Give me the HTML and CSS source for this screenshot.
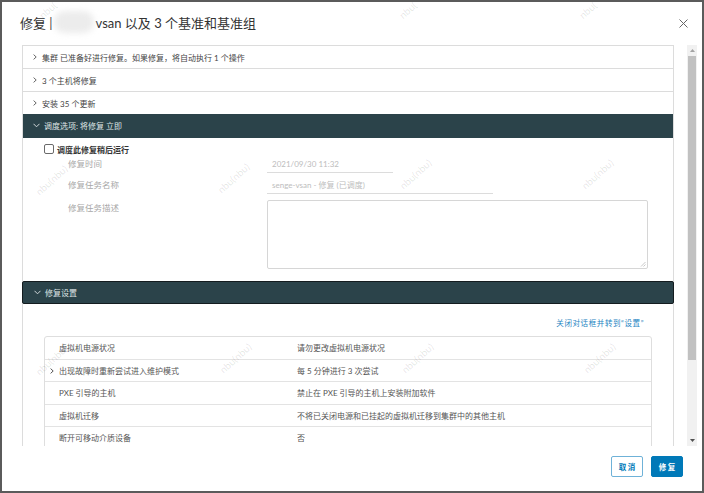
FILE: index.html
```html
<!DOCTYPE html>
<html lang="zh-CN">
<head>
<meta charset="utf-8">
<title>修复</title>
<link rel="stylesheet" href="styles.css">
</head>
<body>
<div class="dialog">
  <header class="dlg-head">
    <h1 class="title">修复 |<span class="blur"></span>vsan 以及 3 个基准和基准组</h1>
    <button class="close" aria-label="关闭">
      <svg width="9" height="9" viewBox="0 0 9 9"><path d="M0.5 0.5L8.5 8.5M8.5 0.5L0.5 8.5" stroke="#666" stroke-width="1" fill="none"/></svg>
    </button>
  </header>
  <div class="dlg-body">
    <div class="scroll">
      <div class="acc">
        <div class="acc-row"><svg class="chev" width="4" height="6" viewBox="0 0 4 6"><path d="M0.6 0.6L3.2 3L0.6 5.4" stroke="#555" stroke-width="0.9" fill="none"/></svg>集群 已准备好进行修复。如果修复，将自动执行 1 个操作</div>
        <div class="acc-row"><svg class="chev" width="4" height="6" viewBox="0 0 4 6"><path d="M0.6 0.6L3.2 3L0.6 5.4" stroke="#555" stroke-width="0.9" fill="none"/></svg>3 个主机将修复</div>
        <div class="acc-row"><svg class="chev" width="4" height="6" viewBox="0 0 4 6"><path d="M0.6 0.6L3.2 3L0.6 5.4" stroke="#555" stroke-width="0.9" fill="none"/></svg>安装 35 个更新</div>
        <div class="acc-row dark"><svg class="chev-d" width="7" height="5" viewBox="0 0 7 5"><path d="M0.5 0.8L3.5 3.8L6.5 0.8" stroke="#cfd6d8" fill="none"/></svg>调度选项: 将修复 立即</div>
        <div class="acc-panel">
          <label class="check-row"><span class="checkbox"></span>调度此修复稍后运行</label>
          <div class="form">
            <span class="flabel">修复时间</span>
            <div class="finput short">2021/09/30 11:32</div>
            <span class="flabel">修复任务名称</span>
            <div class="finput mid">senge-vsan - 修复 (已调度)</div>
            <span class="flabel tl">修复任务描述</span>
            <div class="ftextarea"><svg class="grip" width="6" height="6" viewBox="0 0 6 6"><path d="M5.5 1L1 5.5M5.5 3.5L3.5 5.5" stroke="#bbb" stroke-width="0.8"/></svg></div>
          </div>
        </div>
        <div class="acc-row dark focus"><svg class="chev-d" width="7" height="5" viewBox="0 0 7 5"><path d="M0.5 0.8L3.5 3.8L6.5 0.8" stroke="#cfd6d8" fill="none"/></svg>修复设置</div>
        <div class="acc-panel2">
          <div class="link-row"><a class="link">关闭对话框并转到“设置”</a></div>
          <div class="table">
            <div class="trow"><span class="c1">虚拟机电源状况</span><span class="c2">请勿更改虚拟机电源状况</span></div>
            <div class="trow"><span class="c1"><svg class="tchev" width="4" height="6" viewBox="0 0 4 6"><path d="M0.6 0.6L3.2 3L0.6 5.4" stroke="#444" stroke-width="0.9" fill="none"/></svg>出现故障时重新尝试进入维护模式</span><span class="c2">每 5 分钟进行 3 次尝试</span></div>
            <div class="trow"><span class="c1">PXE 引导的主机</span><span class="c2">禁止在 PXE 引导的主机上安装附加软件</span></div>
            <div class="trow"><span class="c1">虚拟机迁移</span><span class="c2">不将已关闭电源和已挂起的虚拟机迁移到集群中的其他主机</span></div>
            <div class="trow"><span class="c1">断开可移动介质设备</span><span class="c2">否</span></div>
          </div>
        </div>
      </div>
    </div>
    <div class="scrollbar">
      <svg class="arr" width="5" height="3" viewBox="0 0 5 3"><path d="M0 3L2.5 0L5 3Z" fill="#a3a3a3"/></svg>
      <div class="thumb"></div>
      <svg class="arr down" width="5" height="3" viewBox="0 0 5 3"><path d="M0 0L2.5 3L5 0Z" fill="#505050"/></svg>
    </div>
  </div>
  <footer class="dlg-foot">
    <button class="btn outline">取消</button>
    <button class="btn primary">修复</button>
  </footer>
  <div class="wm" aria-hidden="true">
    <span style="left:36px;top:2px">nbu(</span>
    <span style="left:396px;top:2px">nbu(</span>
    <span style="left:576px;top:2px">nbu(</span>
    <span style="left:30px;top:172px">nbu(nbu)</span>
    <span style="left:212px;top:170px">nbu(nbu)</span>
    <span style="left:394px;top:166px">nbu(nbu)</span>
    <span style="left:576px;top:166px">nbu(nbu)</span>
    <span style="left:30px;top:352px">nbu(nbu)</span>
    <span style="left:214px;top:350px">nbu(nbu)</span>
    <span style="left:396px;top:350px">nbu(nbu)</span>
    <span style="left:578px;top:350px">nbu(nbu)</span>
  </div>
</div>
</body>
</html>
```

FILE: styles.css
```css
* { box-sizing: border-box; }
html, body { margin: 0; padding: 0; background: #fff; }
body {
  font-family: Lato, "Noto Sans CJK SC", sans-serif;
  color: #333;
  width: 704px;
  height: 493px;
  overflow: hidden;
}
.dialog {
  position: relative;
  width: 704px;
  height: 493px;
  border: 2px solid #5b5b5b;
  display: flex;
  flex-direction: column;
  background: #fff;
  overflow: hidden;
}
.dlg-head {
  height: 42px;
  display: flex;
  align-items: center;
  justify-content: space-between;
  padding: 0 14px 2px 18px;
  flex: none;
}
.title {
  margin: 0;
  font-weight: 400;
  font-size: 13px;
  color: #333;
  display: flex;
  align-items: center;
  white-space: pre;
}
.blur {
  display: inline-block;
  width: 40px;
  height: 22px;
  margin: 0 2px 0 1px;
  background: #ececec;
  border-radius: 11px;
  filter: blur(3px);
}
.close {
  border: 0;
  background: none;
  padding: 0;
  width: 9px;
  height: 9px;
  display: flex;
  margin-top: 2px;
}
.dlg-body {
  flex: none;
  height: 402px;
  display: flex;
  padding-left: 20px;
}
.scroll {
  width: 652px;
  height: 402px;
  overflow: hidden;
  padding-top: 1px;
}
.acc {
  border: 1px solid #dcdcdc;
  border-bottom: 0;
  min-height: 600px;
}
.acc-row {
  height: 23px;
  border-bottom: 1px solid #dcdcdc;
  display: flex;
  align-items: center;
  padding-left: 10px;
  font-size: 8px;
  color: #444;
}
.chev { margin-right: 5px; flex: none; }
.acc-row.dark {
  margin-top: -1px;
  height: 24px;
  background: #2b434a;
  color: #dfe5e6;
  border-bottom-color: #2b434a;
}
.chev-d { margin-right: 4px; }
.acc-row.focus {
  margin: 0 -1px;
  height: 23px;
  padding-left: 11px;
  border: 1px solid #141c1f;
  border-radius: 2px;
}
.acc-panel {
  padding: 5px 0 0 21px;
  height: 143px;
}
.check-row {
  display: flex;
  align-items: center;
  height: 12px;
  font-size: 8px;
  font-weight: 700;
  color: #333;
}
.checkbox {
  width: 10px;
  height: 10px;
  border: 1px solid #6a6a6a;
  border-radius: 2px;
  margin-right: 3px;
  background: #fff;
}
.form {
  margin-top: 1px;
  display: grid;
  grid-template-columns: 199px 1fr;
  row-gap: 4px;
  padding-left: 24px;
}
.flabel {
  font-size: 8.5px;
  color: #a8a8a8;
  line-height: 12px;
  padding-top: 2px;
}
.flabel.tl { margin-top: 2px; }
.finput {
  font-size: 8px;
  color: #bdbdbd;
  line-height: 12px;
  padding: 2px 0 2px 5px;
  height: 17px;
  border-bottom: 1px solid #dcdcdc;
}
.finput.short { width: 126px; }
.finput.mid { width: 226px; }
.ftextarea {
  margin-top: 2px;
  width: 381px;
  height: 69px;
  border: 1px solid #d6d6d6;
  border-radius: 2px;
  position: relative;
}
.grip { position: absolute; right: 1px; bottom: 1px; }
.acc-panel2 { padding: 12px 21px 0 21px; }
.link-row {
  display: flex;
  justify-content: flex-end;
  padding-right: 8px;
  height: 12px;
  align-items: center;
}
.link {
  font-size: 7.5px;
  color: #1d84c2;
  letter-spacing: 0.6px;
}
.table {
  margin-top: 8px;
  border: 1px solid #dedede;
  border-radius: 3px 3px 0 0;
}
.trow {
  height: 22.5px;
  border-bottom: 1px solid #e3e3e3;
  display: flex;
  align-items: center;
  font-size: 8px;
  color: #555;
}
.c1 {
  width: 252px;
  padding-left: 14px;
  position: relative;
}
.tchev {
  position: absolute;
  left: 5px;
  top: 3px;
}
.scrollbar {
  margin-left: 13px;
  margin-top: 1px;
  width: 10px;
  height: 401px;
  background: #f1f1f1;
  display: flex;
  flex-direction: column;
  align-items: center;
}
.arr { margin-top: 4px; flex: none; }
.thumb {
  margin-top: 4px;
  width: 8px;
  height: 304px;
  background: #c1c1c1;
}
.arr.down { margin-top: auto; margin-bottom: 4px; }
.dlg-foot {
  flex: 1;
  display: flex;
  justify-content: flex-end;
  align-items: flex-start;
  gap: 8px;
  padding: 10px 19px 0 0;
}
.btn {
  width: 32px;
  height: 21px;
  font-family: Lato, "Noto Sans CJK SC", sans-serif;
  font-size: 7.5px;
  font-weight: 700;
  letter-spacing: 1.5px;
  padding: 0 0 0 1.5px;
  border-radius: 2px;
  border: 1px solid #0079b8;
}
.btn.outline { background: #fff; color: #0079b8; border-color: #6fb2d8; }
.btn.primary { background: #0079b8; color: #fff; }
.wm {
  position: absolute;
  inset: 0;
  pointer-events: none;
}
.wm span {
  position: absolute;
  font-size: 10px;
  color: rgba(0, 0, 0, 0.11);
  transform: rotate(-42deg);
  transform-origin: center;
  white-space: nowrap;
}
```
